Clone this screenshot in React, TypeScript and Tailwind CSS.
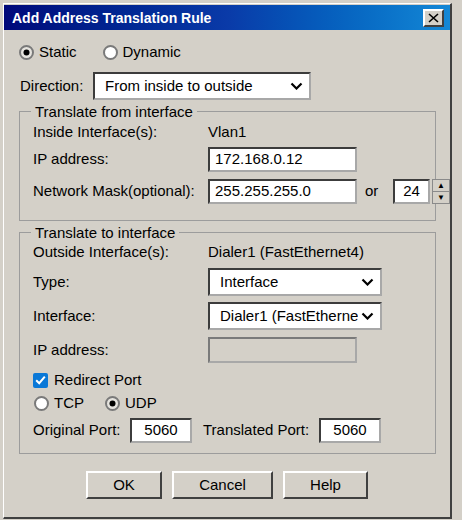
import type { ReactNode } from 'react';

const sunken =
  'border-2 border-t-[#3c3c3c] border-l-[#3c3c3c] border-r-[#a8a8a8] border-b-[#a8a8a8] bg-white';
const raised =
  'border-2 border-t-white border-l-white border-r-[#404040] border-b-[#404040] bg-[#d4d0c8]';

function Radio({ checked, label, className = '' }: { checked: boolean; label: string; className?: string }) {
  return (
    <div className={`flex h-[16px] items-center ${className}`}>
      <svg width="15" height="15" viewBox="0 0 15 15" className="shrink-0">
        <circle cx="7.5" cy="7.5" r="6.5" fill={checked ? '#e6e4df' : '#ffffff'} stroke="#7a7a7a" strokeWidth="2" />
        {checked && <circle cx="7.5" cy="7.5" r="3" fill="#000" />}
      </svg>
      <span className="ml-[5px] leading-[16px]">{label}</span>
    </div>
  );
}

function Chevron() {
  return (
    <svg width="13" height="8" viewBox="0 0 13 8" className="shrink-0">
      <path d="M1.5 1.5 L6.5 6.5 L11.5 1.5" fill="none" stroke="#000" strokeWidth="2.2" />
    </svg>
  );
}

function Select({ value, className, pl }: { value: string; className: string; pl: string }) {
  return (
    <div className={`flex items-center overflow-hidden ${sunken} ${className}`}>
      <span className={`flex-1 overflow-hidden whitespace-nowrap ${pl}`}>{value}</span>
      <div className="flex w-[22px] shrink-0 justify-center bg-white pr-[4px]">
        <Chevron />
      </div>
    </div>
  );
}

function Group({ title, children, className = '' }: { title: string; children: ReactNode; className?: string }) {
  return (
    <div className={`flex w-[417px] flex-col border border-[#9c9c9c] ${className}`}>
      <span className="-mt-[9px] ml-[11px] self-start bg-[#d4d0c8] px-[4px] leading-[17px]">{title}</span>
      {children}
    </div>
  );
}

export default function App() {
  return (
    <div className="h-[520px] w-[462px] bg-[#d4d0c8] pl-[3px] pt-[3px] font-['Liberation_Sans',Arial,sans-serif] text-[15px] text-black">
      <div className="flex h-[516px] w-[449px] flex-col border-t border-l border-white border-r-2 border-b-2 border-r-[#404040] border-b-[#404040]">
        {/* title bar */}
        <div className="mt-[1px] flex h-[25px] items-center bg-linear-to-r from-[#00087a] via-[#0a3aa8] to-[#1488d6] pl-[8px] pr-[6px]">
          <span className="flex-1 text-[14px] font-bold leading-none text-white">Add Address Translation Rule</span>
          <div className={`flex h-[18px] w-[21px] items-center justify-center ${raised} border-r-[#5a5a5a] border-b-[#5a5a5a]`}>
            <svg width="11" height="10" viewBox="0 0 11 10">
              <path d="M1 1 L10 9 M10 1 L1 9" stroke="#000" strokeWidth="1.6" />
            </svg>
          </div>
        </div>

        <div className="flex flex-col pl-[15px]">
          <div className="mt-[14px] flex">
            <Radio checked label="Static" />
            <Radio checked={false} label="Dynamic" className="ml-[26px]" />
          </div>

          <div className="mt-[12px] flex h-[28px] items-center">
            <span className="w-[74px] pl-[1px]">Direction:</span>
            <Select value="From inside to outside" className="h-[28px] w-[218px]" pl="pl-[10px]" />
          </div>

          <Group title="Translate from interface" className="mt-[11px] pb-[16px]">
            <div className="mt-[2px] grid grid-cols-[175px_1fr] items-center pl-[13px]">
              <span className="h-[20px] leading-[20px]">Inside Interface(s):</span>
              <span className="leading-[20px]">Vlan1</span>

              <span className="mt-[5px]">IP address:</span>
              <div className={`mt-[5px] flex h-[25px] w-[149px] items-center pl-[5px] ${sunken}`}>172.168.0.12</div>

              <span className="mt-[7px]">Network Mask(optional):</span>
              <div className="mt-[7px] flex items-center">
                <div className={`flex h-[25px] w-[149px] items-center pl-[5px] ${sunken}`}>255.255.255.0</div>
                <span className="ml-[8px] w-[28px]">or</span>
                <div className={`flex h-[25px] w-[37px] items-center justify-center ${sunken}`}>24</div>
                <div className="ml-[2px] flex h-[25px] w-[18px] flex-col border border-[#8a8a8a] bg-[#d4d0c8]">
                  <div className="flex flex-1 items-center justify-center border-b border-[#8a8a8a] text-[8px] leading-none">▲</div>
                  <div className="flex flex-1 items-center justify-center text-[8px] leading-none">▼</div>
                </div>
              </div>
            </div>
          </Group>

          <Group title="Translate to interface" className="mt-[11px] pb-[10px]">
            <div className="mt-[1px] grid grid-cols-[175px_1fr] items-center pl-[13px]">
              <span className="h-[20px] leading-[20px]">Outside Interface(s):</span>
              <span className="leading-[20px]">Dialer1 (FastEthernet4)</span>

              <span className="mt-[6px]">Type:</span>
              <Select value="Interface" className="mt-[6px] h-[28px] w-[174px]" pl="pl-[10px]" />

              <span className="mt-[6px]">Interface:</span>
              <Select value="Dialer1 (FastEthernet4)" className="mt-[6px] h-[28px] w-[174px]" pl="pl-[10px]" />

              <span className="mt-[7px]">IP address:</span>
              <div className="mt-[7px] h-[26px] w-[149px] border-2 border-t-[#7a7a7a] border-l-[#7a7a7a] border-r-[#a8a8a8] border-b-[#a8a8a8] bg-[#d4d0c8]" />
            </div>

            <div className="mt-[9px] flex h-[16px] items-center pl-[13px]">
              <div className="flex h-[15px] w-[15px] items-center justify-center rounded-[2px] bg-[#0a78d7]">
                <svg width="11" height="10" viewBox="0 0 11 10">
                  <path d="M1.2 5.2 L4.2 8.2 L9.8 1.6" fill="none" stroke="#fff" strokeWidth="2" />
                </svg>
              </div>
              <span className="ml-[6px] leading-[16px]">Redirect Port</span>
            </div>

            <div className="mt-[7px] flex pl-[14px]">
              <Radio checked={false} label="TCP" />
              <Radio checked label="UDP" className="ml-[21px]" />
            </div>

            <div className="mt-[7px] flex h-[25px] items-center pl-[13px]">
              <span className="w-[97px]">Original Port:</span>
              <div className={`flex h-[25px] w-[62px] items-center justify-center ${sunken}`}>5060</div>
              <span className="ml-[11px] w-[116px]">Translated Port:</span>
              <div className={`flex h-[25px] w-[62px] items-center justify-center ${sunken}`}>5060</div>
            </div>
          </Group>

          <div className="mt-[17px] flex gap-[10px] pl-[67px]">
            <div className={`flex h-[28px] w-[76px] items-center justify-center ${raised}`}>OK</div>
            <div className={`flex h-[28px] w-[101px] items-center justify-center ${raised}`}>Cancel</div>
            <div className={`flex h-[28px] w-[85px] items-center justify-center ${raised}`}>Help</div>
          </div>
        </div>
      </div>
    </div>
  );
}
